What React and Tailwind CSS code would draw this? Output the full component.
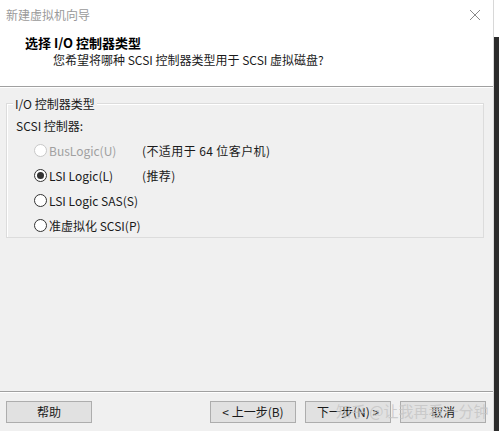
const Radio = ({ checked, disabled, label, note }) => {
  return (
    <div className="flex items-center h-[25px]">
      <div className="flex items-center w-[108px]">
        <span
          className={`w-[13px] h-[13px] rounded-full border flex items-center justify-center bg-white ${
            disabled ? "border-[#c8c8c8]" : "border-[#333333]"
          }`}
        >
          {checked && <span className="w-[7px] h-[7px] rounded-full bg-[#333333]" />}
        </span>
        <span className={`ml-[2px] ${disabled ? "text-[#a0a0a0]" : "text-[#1a1a1a]"}`}>{label}</span>
      </div>
      {note && <span className="text-[#1a1a1a] tracking-[0.4px]">{note}</span>}
    </div>
  );
};

const Btn = ({ children }) => (
  <div className="w-[86px] h-[22px] bg-[#e1e1e1] border border-[#adadad] flex items-center justify-center text-[#1a1a1a]">
    {children}
  </div>
);

export default function App() {
  return (
    <div
      className="w-[499px] h-[431px] flex bg-white text-[12px] overflow-hidden relative"
      style={{ fontFamily: '"Noto Sans CJK SC", "Noto Sans", sans-serif' }}
    >
      <div className="w-[494px] h-full flex flex-col border-r border-[#d8d8d8]">
        {/* title bar + header */}
        <div className="bg-white h-[86px] flex flex-col">
          <div className="h-[30px] flex items-center justify-between pl-[6px] pr-[10px]">
            <span className="text-[#9a9a9a] text-[12px]">新建虚拟机向导</span>
            <svg width="12" height="12" viewBox="0 0 12 12" className="mr-[2px]">
              <path d="M1 1 L11 11 M11 1 L1 11" stroke="#8a8a8a" strokeWidth="1" />
            </svg>
          </div>
          <div className="pl-[25px] mt-[4px] font-bold text-[13px] text-black leading-[18px]">
            选择 I/O 控制器类型
          </div>
          <div className="pl-[53px] text-[12px] text-[#1a1a1a] leading-[16px]">
            您希望将哪种 SCSI 控制器类型用于 SCSI 虚拟磁盘?
          </div>
        </div>
        <div className="h-px bg-[#a0a0a0]" />
        <div className="h-px bg-white" />

        {/* body */}
        <div className="flex-1 bg-[#f0f0f0] flex flex-col px-[6px]">
          <div className="mt-[15px] mr-[3px] relative border border-[#dcdcdc] shadow-[inset_1px_1px_0_#ffffff] h-[135px] pt-[14px] pl-[9px]">
            <span className="absolute -top-[9px] left-[6px] bg-[#f0f0f0] px-[2px] text-[#1a1a1a]">
              I/O 控制器类型
            </span>
            <div className="text-[#1a1a1a] leading-[16px] mb-[4px]">SCSI 控制器:</div>
            <div className="pl-[18px] flex flex-col">
              <Radio disabled label="BusLogic(U)" note="(不适用于 64 位客户机)" />
              <Radio checked label="LSI Logic(L)" note="(推荐)" />
              <Radio label="LSI Logic SAS(S)" />
              <Radio label="准虚拟化 SCSI(P)" />
            </div>
          </div>
          <div className="flex-1" />
          <div className="h-px bg-[#a0a0a0] -mx-[6px]" />
          <div className="h-px bg-white -mx-[6px]" />
          <div className="h-[38px] flex items-center">
            <Btn>帮助</Btn>
            <div className="flex-1" />
            <div className="flex gap-[9px] mr-[1px]">
              <Btn>&lt; 上一步(B)</Btn>
              <Btn>下一步(N) &gt;</Btn>
              <Btn>取消</Btn>
            </div>
          </div>
        </div>
      </div>
      <div className="flex-1 flex flex-col">
        <div className="h-[37px] bg-white" />
        <div className="flex-1 bg-[#2b2b2b]" />
      </div>

      {/* watermark */}
      <div className="absolute left-[336px] top-[401px] whitespace-nowrap text-[15px] leading-[20px] text-[#c4c4c4]/80 pointer-events-none">
        知乎 @让我再看一分钟
      </div>
    </div>
  );
}
